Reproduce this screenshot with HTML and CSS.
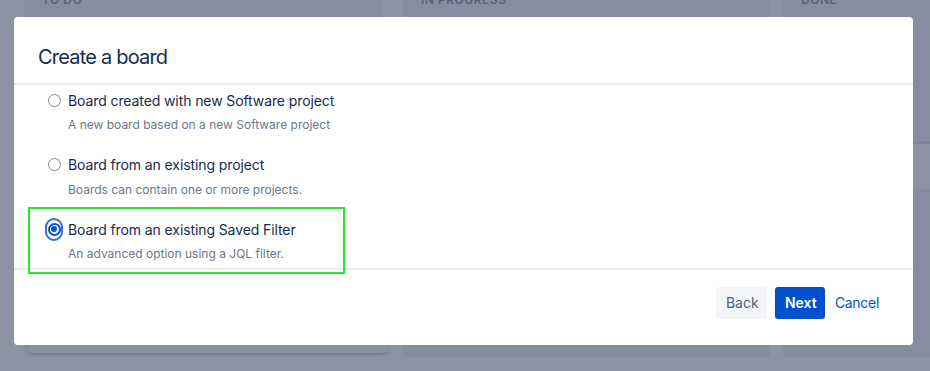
FILE: index.html
```html
<!DOCTYPE html>
<html>
<head>
<meta charset="utf-8">
<link rel="stylesheet" href="styles.css">
</head>
<body>
<div class="board">
  <div class="column col1"><div class="col-title">TO DO</div><div class="card card1"></div></div>
  <div class="column col2"><div class="col-title">IN PROGRESS</div><div class="card card2"></div></div>
  <div class="column col3"><div class="col-title">DONE</div><div class="card card3"></div></div>
</div>

<div class="modal">
  <div class="modal-header"><h1 class="modal-title">Create a board</h1></div>
  <div class="modal-body">
    <div class="option">
      <div class="row"><span class="radio"></span><span class="label">Board created with new Software project</span></div>
      <div class="desc">A new board based on a new Software project</div>
    </div>
    <div class="option">
      <div class="row"><span class="radio"></span><span class="label">Board from an existing project</span></div>
      <div class="desc">Boards can contain one or more projects.</div>
    </div>
    <div class="option">
      <div class="row"><span class="focus-ring"><span class="radio checked"></span></span><span class="label">Board from an existing Saved Filter</span></div>
      <div class="desc">An advanced option using a JQL filter.</div>
    </div>
  </div>
  <div class="modal-footer">
    <button class="btn btn-back">Back</button>
    <button class="btn btn-next">Next</button>
    <button class="btn btn-link">Cancel</button>
  </div>
  <div class="highlight"></div>
</div>
</body>
</html>
```

FILE: styles.css
```css
html, body {
  margin: 0;
  padding: 0;
}
body {
  width: 930px;
  height: 371px;
  overflow: hidden;
  background: #8b94a5;
  font-family: "Inter", "Liberation Sans", sans-serif;
  position: relative;
}
.board {
  display: flex;
  height: 371px;
}
.column {
  background: #858ea0;
  box-sizing: border-box;
  height: 357px;
  display: flex;
  flex-direction: column;
}
.col1 { margin-left: 24px; width: 359px; }
.col2 { margin-left: 20px; width: 367px; }
.col3 { margin-left: 13px; flex: 1; }
.col-title {
  font-size: 12px;
  font-weight: 600;
  color: #56617a;
  letter-spacing: 0.5px;
  margin-top: -8px;
  padding-left: 18px;
  height: 16px;
  line-height: 16px;
}
.card1 {
  margin: auto 0 4px 5px;
  width: 359px;
  height: 40px;
  background: #89929f;
  box-shadow: 0 1px 2px rgba(60,70,90,0.4);
  border-radius: 3px;
}
.card2 { display: none; }
.card3 {
  margin-top: 133px;
  height: 45px;
  border-top: 3px solid #7c8597;
  background: #8b94a5;
}

.modal {
  position: absolute;
  left: 14px;
  top: 17px;
  width: 899px;
  height: 328px;
  background: #fff;
  border-radius: 4px;
  display: flex;
  flex-direction: column;
  box-sizing: border-box;
}
.modal-header {
  flex: none;
  height: 68px;
  border-bottom: 2px solid #ebecf0;
  padding: 14px 0 0 24px;
  display: flex;
  align-items: center;
  box-sizing: border-box;
}
.modal-title {
  margin: 0;
  font-size: 20px;
  font-weight: 400;
  color: #172b4d;
  letter-spacing: -0.8px;
}
.modal-body {
  flex: none;
  height: 185px;
  box-sizing: border-box;
  padding: 4px 0 0 34px;
  border-bottom: 2px solid #ebecf0;
}
.option {
  height: 64.5px;
}
.row {
  display: flex;
  align-items: center;
  height: 22px;
}
.radio {
  width: 11px;
  height: 11px;
  border: 1px solid #7a869a;
  border-radius: 50%;
  box-sizing: content-box;
  display: inline-block;
  flex: none;
}
.radio.checked {
  width: 9px;
  height: 9px;
  border: 2px solid #0052cc;
  background: #fff;
  position: relative;
}
.radio.checked::after {
  content: "";
  position: absolute;
  left: 1.5px;
  top: 1.5px;
  width: 6px;
  height: 6px;
  border-radius: 50%;
  background: #0052cc;
}
.focus-ring {
  width: 14px;
  height: 19px;
  margin-left: -3px;
  margin-right: -2px;
  border: 2px solid #2f6fd6;
  border-radius: 9px;
  display: flex;
  align-items: center;
  justify-content: center;
  flex: none;
}
.label {
  margin-left: 7px;
  font-size: 14px;
  color: #172b4d;
  letter-spacing: -0.1px;
}
.desc {
  margin-top: 6px;
  margin-left: 20px;
  font-size: 12px;
  color: #6b778c;
  line-height: 16px;
}
.modal-footer {
  flex: none;
  height: 75px;
  box-sizing: border-box;
  padding: 0 32px 10px 0;
  display: flex;
  align-items: center;
  justify-content: flex-end;
  gap: 8px;
}
.btn {
  font-family: inherit;
  font-size: 14px;
  height: 32px;
  border: none;
  border-radius: 3px;
  padding: 0 10px;
  cursor: pointer;
}
.btn-back {
  background: #f4f5f7;
  color: #505f79;
  width: 51px;
}
.btn-next {
  background: #0052cc;
  color: #fff;
  font-weight: 600;
  width: 50px;
}
.btn-link {
  background: transparent;
  color: #0052cc;
  padding: 0 2px;
  letter-spacing: -0.3px;
}
.highlight {
  position: absolute;
  left: 14px;
  top: 190px;
  width: 317px;
  height: 67px;
  border: 2px solid #2ee52e;
  box-sizing: border-box;
  pointer-events: none;
}
```
